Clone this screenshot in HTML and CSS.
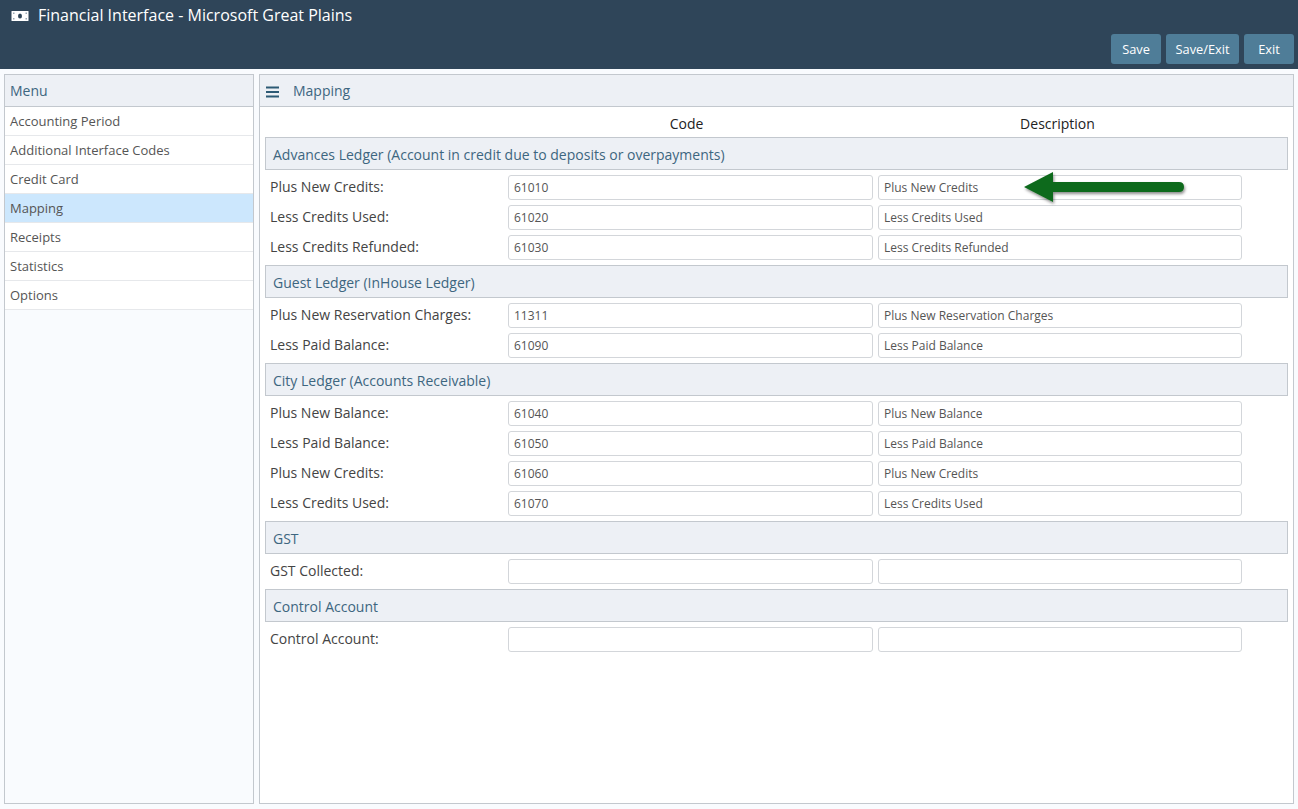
FILE: index.html
```html
<!DOCTYPE html>
<html lang="en">
<head>
    <meta charset="UTF-8">
    <title>Financial Interface - Microsoft Great Plains</title>
    <link rel="stylesheet" href="styles.css">
</head>
<body>
    <header class="topbar">
        <div class="title">
            <svg class="title-icon" width="18" height="12" viewBox="0 0 18 12">
                <rect x="0.5" y="1" width="17" height="10" rx="0.5" fill="#fff"/>
                <ellipse cx="9" cy="6" rx="2" ry="2.6" fill="#2f4559"/>
                <rect x="2" y="2.5" width="1.5" height="1.5" fill="#9aa7b3"/>
                <rect x="14.5" y="2.5" width="1.5" height="1.5" fill="#9aa7b3"/>
                <rect x="2" y="8" width="1.5" height="1.5" fill="#9aa7b3"/>
                <rect x="14.5" y="8" width="1.5" height="1.5" fill="#9aa7b3"/>
            </svg>
            <span>Financial Interface - Microsoft Great Plains</span>
        </div>
        <div class="actions">
            <button class="btn btn-save">Save</button>
            <button class="btn btn-saveexit">Save/Exit</button>
            <button class="btn btn-exit">Exit</button>
        </div>
    </header>

    <div class="layout">
        <aside class="panel sidebar">
            <div class="panel-head">Menu</div>
            <ul class="menu">
                <li>Accounting Period</li>
                <li>Additional Interface Codes</li>
                <li>Credit Card</li>
                <li class="active">Mapping</li>
                <li>Receipts</li>
                <li>Statistics</li>
                <li>Options</li>
            </ul>
        </aside>

        <main class="panel content">
            <div class="panel-head">
                <svg class="burger" width="13" height="12" viewBox="0 0 13 12">
                    <rect y="0.5" width="13" height="2" fill="#2d5a75"/>
                    <rect y="5" width="13" height="2" fill="#2d5a75"/>
                    <rect y="9.5" width="13" height="2" fill="#2d5a75"/>
                </svg>
                <span>Mapping</span>
            </div>

            <div class="form">
                <div class="cols">
                    <div class="col-code">Code</div>
                    <div class="col-desc">Description</div>
                </div>

                <div class="section">Advances Ledger (Account in credit due to deposits or overpayments)</div>
                <div class="row"><label>Plus New Credits:</label><input value="61010"><input value="Plus New Credits"></div>
                <div class="row"><label>Less Credits Used:</label><input value="61020"><input value="Less Credits Used"></div>
                <div class="row"><label>Less Credits Refunded:</label><input value="61030"><input value="Less Credits Refunded"></div>

                <div class="section">Guest Ledger (InHouse Ledger)</div>
                <div class="row"><label>Plus New Reservation Charges:</label><input value="11311"><input value="Plus New Reservation Charges"></div>
                <div class="row"><label>Less Paid Balance:</label><input value="61090"><input value="Less Paid Balance"></div>

                <div class="section">City Ledger (Accounts Receivable)</div>
                <div class="row"><label>Plus New Balance:</label><input value="61040"><input value="Plus New Balance"></div>
                <div class="row"><label>Less Paid Balance:</label><input value="61050"><input value="Less Paid Balance"></div>
                <div class="row"><label>Plus New Credits:</label><input value="61060"><input value="Plus New Credits"></div>
                <div class="row"><label>Less Credits Used:</label><input value="61070"><input value="Less Credits Used"></div>

                <div class="section">GST</div>
                <div class="row"><label>GST Collected:</label><input value=""><input value=""></div>

                <div class="section">Control Account</div>
                <div class="row"><label>Control Account:</label><input value=""><input value=""></div>
            </div>
        </main>
    </div>

    <!-- annotation arrow drawn over the first description field -->
    <svg class="arrow" width="170" height="44" viewBox="0 0 170 44">
        <defs>
            <filter id="arrowShadow" x="-10%" y="-30%" width="120%" height="170%">
                <feDropShadow dx="1" dy="2" stdDeviation="1.6" flood-color="#000" flood-opacity="0.45"/>
            </filter>
        </defs>
        <path d="M4 20 L33 5 L33 15 L159 15 Q164 15 164 20 Q164 25 159 25 L33 25 L33 35 Z" fill="#116a1e" filter="url(#arrowShadow)"/>
    </svg>
</body>
</html>
```

FILE: styles.css
```css
* { box-sizing: border-box; }
html, body { height: 100%; }
body { margin: 0; height: 809px; overflow: hidden; background: #f9fbfe; font-family: "Open Sans", sans-serif; font-size: 13px; color: #444; }

.topbar { height: 69px; background: #2f4559; padding: 5px 4px 5px 11px; display: flex; flex-direction: column; justify-content: space-between; }
.title { display: flex; align-items: center; gap: 9px; color: #fff; font-size: 16px; line-height: 21px; }
.actions { display: flex; justify-content: flex-end; gap: 5px; }
.btn { height: 30px; border: none; border-radius: 3px; background: #4f7d98; color: #fff; font-family: inherit; font-size: 12.800px; padding: 0; }
.btn-save { width: 50px; }
.btn-saveexit { width: 73px; }
.btn-exit { width: 50px; }

.layout { display: flex; gap: 5px; padding: 5px 4px; height: 740px; }
.panel { border: 1px solid #c3c8ce; background: #fff; }
.sidebar { width: 250px; background: #f9fbfe; }
.content { flex: 1; position: relative; }

.panel-head { height: 32px; background: #edf0f5; border-bottom: 1px solid #c3c8ce; color: #3d6680; font-size: 14px; padding: 0 5px; display: flex; align-items: center; }
.burger { margin-right: 14px; margin-left: 1px; margin-top: 2px; }

.menu { list-style: none; margin: 0; padding: 0; }
.menu li { height: 29px; line-height: 28px; padding-left: 5px; border-bottom: 1px solid #e6e8eb; background: #fff; color: #555; }
.menu li.active { background: #cce7fd; }

.form { padding: 0 5px; }
.cols { display: grid; grid-template-columns: 243px 365px 369px; height: 30px; color: #222; font-size: 14px; line-height: 33px; }
.col-code { grid-column: 2; text-align: center; padding-right: 8px; }
.col-desc { grid-column: 3; text-align: center; }

.section { height: 33px; margin-bottom: 5px; background: #edf0f5; border: 1px solid #c3c8ce; color: #3d6680; font-size: 14px; line-height: 33px; padding-left: 7px; }
.row { display: grid; grid-template-columns: 243px 365px 369px; height: 30px; }
.row label { font-size: 14px; color: #444; padding-left: 5px; line-height: 24px; }
.row input { height: 25px; width: 100%; border: 1px solid #d3d6da; border-radius: 3px; background: #fff; padding: 0 5px; font-family: inherit; font-size: 12px; color: #555; outline: none; }
.row input + input { margin-left: 5px; width: calc(100% - 5px); }

.arrow { position: absolute; left: 1020px; top: 167px; }
```
